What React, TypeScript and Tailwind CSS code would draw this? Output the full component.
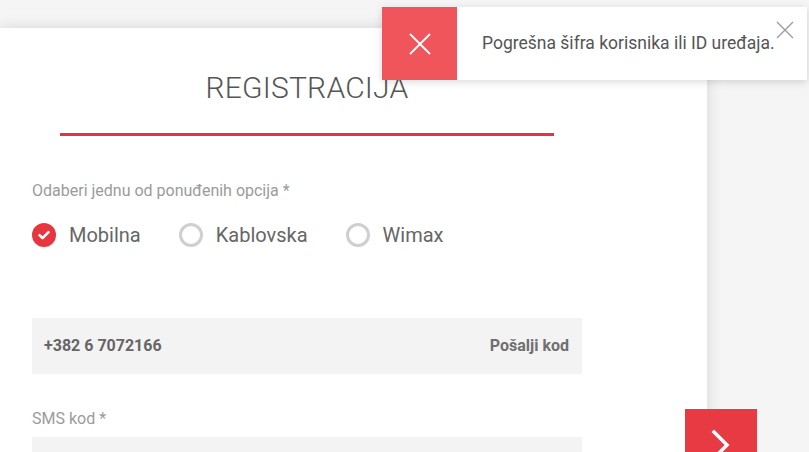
import React, { useState } from "react";

type Option = "mobilna" | "kablovska" | "wimax";

const options: { id: Option; label: string }[] = [
  { id: "mobilna", label: "Mobilna" },
  { id: "kablovska", label: "Kablovska" },
  { id: "wimax", label: "Wimax" },
];

const Radio: React.FC<{ checked: boolean; label: string; onClick: () => void }> = ({
  checked,
  label,
  onClick,
}) => (
  <button type="button" onClick={onClick} className="flex items-center gap-[13px]">
    {checked ? (
      <span className="flex h-6 w-6 items-center justify-center rounded-full bg-[#e8363f]">
        <svg width="14" height="14" viewBox="0 0 14 14" fill="none">
          <path d="M2.5 7.2l3 3 6-6" stroke="white" strokeWidth="2.6" strokeLinecap="round" strokeLinejoin="round" />
        </svg>
      </span>
    ) : (
      <span className="h-6 w-6 rounded-full border-[3px] border-[#cfcfcf]" />
    )}
    <span className="text-[20px] text-[#666]">{label}</span>
  </button>
);

const App: React.FC = () => {
  const [selected, setSelected] = useState<Option>("mobilna");
  const [phone] = useState("+382 6 7072166");

  return (
    <div className="relative h-[452px] w-[809px] overflow-hidden bg-[#f5f5f5] font-['Roboto',sans-serif]">
      {/* Card */}
      <div className="pt-[28px]">
        <div className="h-[480px] w-[707px] bg-white pl-[32px] pt-[42px] shadow-[0_0_14px_rgba(0,0,0,0.13)]">
          <div className="w-[550px]">
            <h1 className="text-center text-[30px] leading-[36px] font-light text-[#555] tracking-[0.2px]">
              REGISTRACIJA
            </h1>
            <div className="mx-[28px] mt-[27px] h-[3px] bg-[#e2363e]" />

            <p className="mt-[46px] text-[16px] leading-[18px] text-[#9b9b9b]">
              Odaberi jednu od ponuđenih opcija *
            </p>
            <div className="mt-[20px] flex items-center gap-[38px]">
              {options.map((o) => (
                <Radio
                  key={o.id}
                  checked={selected === o.id}
                  label={o.label}
                  onClick={() => setSelected(o.id)}
                />
              ))}
            </div>

            <div className="mt-[68px] flex h-[56px] items-center justify-between bg-[#f3f3f3] pl-[12px] pr-[13px]">
              <span className="text-[16px] font-bold text-[#666]">{phone}</span>
              <button type="button" className="text-[16px] font-bold text-[#6f6f6f]">
                Pošalji kod
              </button>
            </div>

            <p className="mt-[36px] text-[16px] leading-[18px] text-[#9b9b9b]">SMS kod *</p>
            <div className="mt-[9px] h-[56px] bg-[#f3f3f3]" />
          </div>
        </div>
      </div>

      {/* Next button */}
      <button
        type="button"
        className="absolute left-[685px] top-[409px] flex h-[72px] w-[72px] items-center justify-center bg-[#e83a43]"
      >
        <svg width="24" height="36" viewBox="0 0 24 36" fill="none">
          <path d="M5 5l13 13-13 13" stroke="white" strokeWidth="3.5" strokeLinecap="square" />
        </svg>
      </button>

      {/* Toast */}
      <div className="absolute left-[382px] top-[7px] flex h-[73px] w-[425px] bg-white shadow-[0_2px_8px_rgba(0,0,0,0.15)]">
        <div className="flex h-full w-[75px] items-center justify-center bg-[#f0555b]">
          <svg width="22" height="22" viewBox="0 0 22 22" fill="none">
            <path d="M1 1l20 20M21 1L1 21" stroke="white" strokeWidth="1.8" />
          </svg>
        </div>
        <p className="ml-[25px] self-center text-[17.5px] text-[#555]">
          Pogrešna šifra korisnika ili ID uređaja.
        </p>
        <button type="button" className="absolute right-[13px] top-[14px]">
          <svg width="18" height="18" viewBox="0 0 18 18" fill="none">
            <path d="M1 1l16 16M17 1L1 17" stroke="#9a9a9a" strokeWidth="1.3" />
          </svg>
        </button>
      </div>
    </div>
  );
};

export default App;
